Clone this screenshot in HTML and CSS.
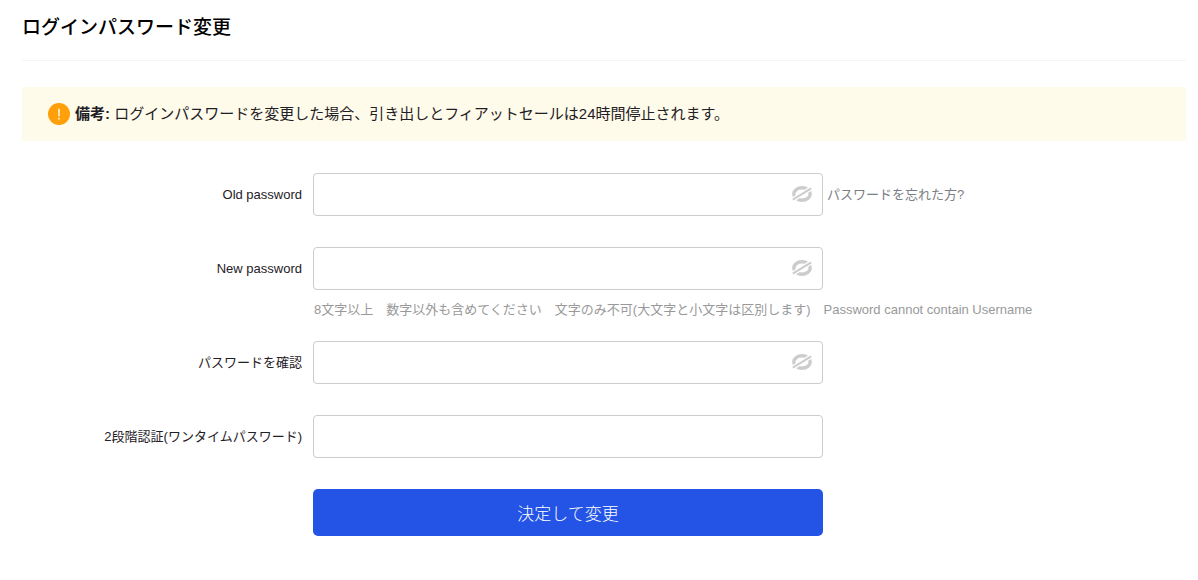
FILE: index.html
```html
<!DOCTYPE html>
<html lang="ja">
<head>
    <meta charset="UTF-8">
    <meta name="viewport" content="width=device-width, initial-scale=1.0">
    <title>ログインパスワード変更</title>
    <link rel="stylesheet" href="styles.css">
</head>
<body>
    <svg width="0" height="0" class="sprite">
        <symbol id="eye-off" viewBox="0 0 20 16">
            <ellipse cx="10" cy="8" rx="8.2" ry="6.3" class="ring"/>
            <path d="M-1 14.8 21 1.2" class="gap"/>
            <path d="M.8 13.6 19.2 2.4" class="slash"/>
        </symbol>
    </svg>

    <main class="page">
        <h1>ログインパスワード変更</h1>

        <div class="notice">
            <svg class="notice-icon" viewBox="0 0 22 22">
                <circle cx="11" cy="11" r="11" fill="#ff9f0a"/>
                <path d="M11 5.8v7.4M11 14.8v1.6" stroke="#fff" stroke-width="1.4"/>
            </svg>
            <p><strong>備考:</strong> ログインパスワードを変更した場合、引き出しとフィアットセールは24時間停止されます。</p>
        </div>

        <form>
            <div class="field">
                <label for="old-password">Old password</label>
                <div class="control">
                    <input type="password" id="old-password">
                    <button type="button" class="toggle" aria-label="表示"><svg><use href="#eye-off"/></svg></button>
                </div>
                <a href="#" class="forgot">パスワードを忘れた方?</a>
            </div>
            <div class="field with-hint">
                <label for="new-password">New password</label>
                <div class="control">
                    <input type="password" id="new-password">
                    <button type="button" class="toggle" aria-label="表示"><svg><use href="#eye-off"/></svg></button>
                </div>
                <p class="hint">8文字以上　数字以外も含めてください　文字のみ不可(大文字と小文字は区別します)　Password cannot contain Username</p>
            </div>
            <div class="field">
                <label for="confirm-password">パスワードを確認</label>
                <div class="control">
                    <input type="password" id="confirm-password">
                    <button type="button" class="toggle" aria-label="表示"><svg><use href="#eye-off"/></svg></button>
                </div>
            </div>
            <div class="field">
                <label for="otp">2段階認証(ワンタイムパスワード)</label>
                <div class="control">
                    <input type="text" id="otp">
                </div>
            </div>
            <div class="field">
                <button type="submit" class="submit">決定して変更</button>
            </div>
        </form>
    </main>
</body>
</html>
```

FILE: styles.css
```css
* {
    box-sizing: border-box;
}

body {
    margin: 0;
    background-color: #fff;
    color: #1e2026;
    font-family: "Liberation Sans", "Noto Sans CJK JP", sans-serif;
    font-size: 13px;
    line-height: 20px;
}

.sprite {
    position: absolute;
}

.page {
    padding: 13px 12px 0 22px;
}

h1 {
    margin: 0 0 26px;
    padding-bottom: 17px;
    border-bottom: 1px solid #f4f4f4;
    color: #000;
    font-size: 19px;
    font-weight: 500;
    line-height: 30px;
}

.notice {
    display: flex;
    align-items: center;
    gap: 5px;
    margin-bottom: 32px;
    padding: 16px 26px;
    background-color: #fffbea;
    font-size: 15px;
    line-height: 22px;
}

.notice p {
    margin: 0;
}

.notice-icon {
    flex-shrink: 0;
    width: 22px;
    height: 22px;
}

.field {
    display: grid;
    grid-template-columns: 280px minmax(0, 510px) 1fr;
    column-gap: 11px;
    align-items: center;
    margin-bottom: 31px;
}

.with-hint {
    margin-bottom: 21px;
}

label {
    text-align: right;
}

.control,
.submit {
    grid-column: 2;
}

.control {
    position: relative;
}

input {
    display: block;
    width: 100%;
    height: 43px;
    padding: 0 40px 0 12px;
    border: 1px solid #ccc;
    border-radius: 4px;
    background-color: #fff;
    font: inherit;
}

.toggle {
    position: absolute;
    top: 13px;
    right: 11px;
    padding: 0;
    border: 0;
    background: none;
    cursor: pointer;
}

.toggle svg {
    display: block;
    width: 20px;
    height: 16px;
}

.ring {
    fill: none;
    stroke: #ccc;
    stroke-width: 3.4;
}

.gap {
    stroke: #fff;
    stroke-width: 4.6;
}

.slash {
    stroke: #ccc;
    stroke-width: 2;
}

.forgot {
    margin-left: -7px;
    color: #7a7d84;
    text-decoration: none;
}

.hint {
    grid-column: 2 / 4;
    margin: 10px 0 0;
    padding-left: 1px;
    color: #999;
}

.submit {
    height: 47px;
    border: 0;
    border-radius: 5px;
    background-color: #2354e6;
    color: #fff;
    font-family: inherit;
    font-size: 17px;
    font-weight: 300;
    cursor: pointer;
}
```
